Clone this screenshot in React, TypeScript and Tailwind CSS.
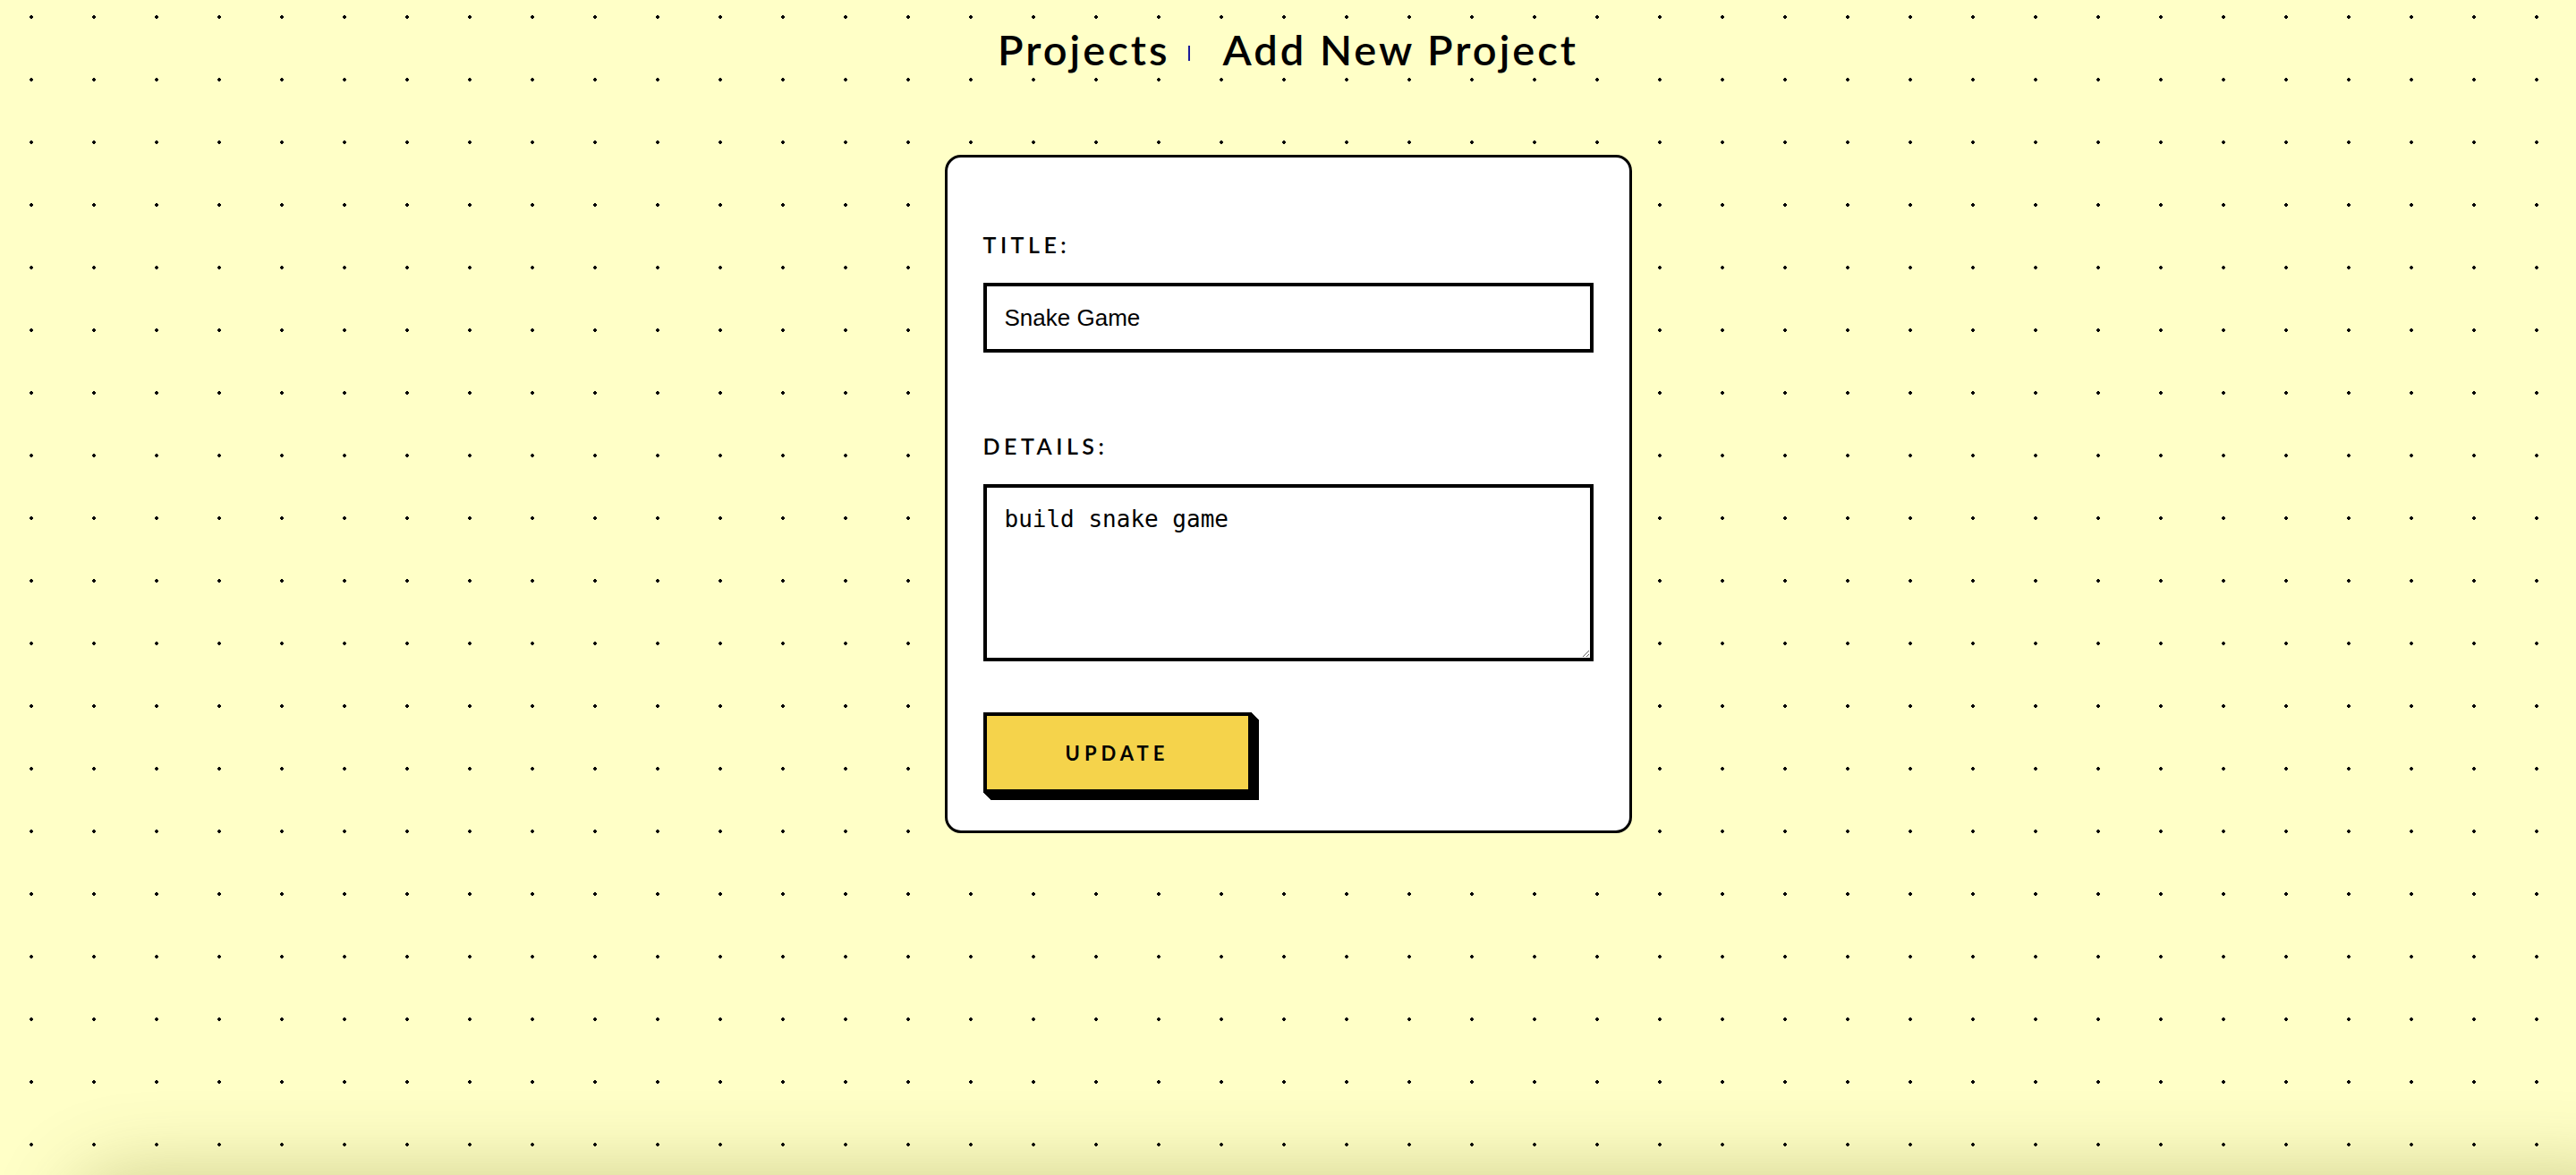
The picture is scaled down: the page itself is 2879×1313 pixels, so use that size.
import React from 'react'

const App: React.FC = () => {
  return (
    <div className="relative min-h-screen w-full overflow-hidden bg-[#ffffc7] bg-[radial-gradient(circle,#000_2px,transparent_2px)] bg-[length:70px_70px] bg-[position:0px_-16px] font-['Lato','Noto_Sans',sans-serif] text-black">
      <nav className="flex items-center justify-center pt-[32px] text-[47px] font-semibold leading-[47px] tracking-[3px]">
        <a className="cursor-pointer">Projects</a>
        <span className="ml-[21px] mr-[36px] mt-[7px] h-[17px] w-[2px] bg-[#1a1a9a]" />
        <a className="cursor-pointer">Add New Project</a>
      </nav>

      <div className="mx-auto mt-[94px] w-[768px] rounded-[18px] border-[3px] border-black bg-white px-[40px] pb-[42px] pt-[85px]">
        <form>
          <label className="block text-[25px] font-semibold leading-[25px] tracking-[4.5px]">TITLE:</label>
          <input
            type="text"
            defaultValue="Snake Game"
            className="mt-[30px] block h-[78px] w-full border-4 border-black bg-white px-[20px] font-['Liberation_Sans',Arial,sans-serif] text-[26px] outline-none"
          />

          <label className="mt-[92px] block text-[25px] font-semibold leading-[25px] tracking-[4.5px]">DETAILS:</label>
          <textarea
            defaultValue="build snake game"
            className="mt-[30px] block h-[198px] w-full border-4 border-black bg-white px-[20px] pt-[20px] font-['DejaVu_Sans_Mono',monospace] text-[26px] leading-[30px] outline-none"
          />

          <button
            type="button"
            className="mt-[57px] block h-[90px] w-[300px] border-4 border-black bg-[#f5d34b] text-[22px] font-bold tracking-[5px] shadow-[1px_1px_0_#000,2px_2px_0_#000,3px_3px_0_#000,4px_4px_0_#000,5px_5px_0_#000,6px_6px_0_#000,7px_7px_0_#000,8px_8px_0_#000]"
          >
            UPDATE
          </button>
        </form>
      </div>

      {/* soft shade along the bottom edge */}
      <div className="pointer-events-none absolute bottom-[-120px] left-[80px] right-[-80px] h-[120px] rounded-[60px] shadow-[0_0_90px_rgba(90,90,0,0.3)]" />
    </div>
  )
}

export default App
